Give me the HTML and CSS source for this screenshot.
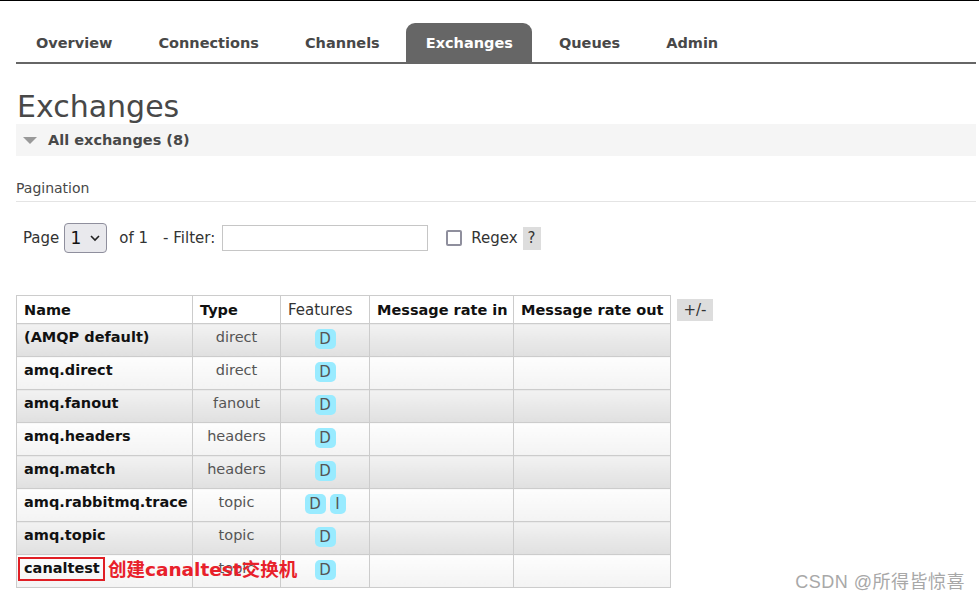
FILE: index.html
```html
<!DOCTYPE html>
<html>
<head>
<meta charset="utf-8">
<link rel="stylesheet" href="styles.css">
</head>
<body>
<div class="page">
  <ul class="tabs">
    <li class="tab">Overview</li>
    <li class="tab">Connections</li>
    <li class="tab">Channels</li>
    <li class="tab active">Exchanges</li>
    <li class="tab">Queues</li>
    <li class="tab">Admin</li>
  </ul>
  <h1 class="title">Exchanges</h1>
  <div class="section-head"><span class="tri"></span>All exchanges (8)</div>
  <div class="pag-label">Pagination</div>
  <div class="pag-row">
    <span class="lbl">Page</span>
    <span class="select">1<svg class="chev" width="12" height="8" viewBox="0 0 12 8"><path d="M2 2 L6 6 L10 2" fill="none" stroke="#222" stroke-width="1.6"/></svg></span>
    <span class="lbl of">of 1</span>
    <span class="lbl filter">- Filter:</span>
    <span class="input"></span>
    <span class="checkbox"></span>
    <span class="lbl regex">Regex</span>
    <span class="help">?</span>
  </div>
  <div class="table-wrap">
    <table class="list">
      <colgroup>
        <col class="c-name"><col class="c-type"><col class="c-feat"><col class="c-in"><col class="c-out">
      </colgroup>
      <thead>
        <tr>
          <th>Name</th>
          <th>Type</th>
          <th class="plain">Features</th>
          <th>Message rate in</th>
          <th>Message rate out</th>
        </tr>
      </thead>
      <tbody>
        <tr class="odd"><td class="name">(AMQP default)</td><td class="type">direct</td><td class="feat"><span class="badge">D</span></td><td></td><td></td></tr>
        <tr class="even"><td class="name">amq.direct</td><td class="type">direct</td><td class="feat"><span class="badge">D</span></td><td></td><td></td></tr>
        <tr class="odd"><td class="name">amq.fanout</td><td class="type">fanout</td><td class="feat"><span class="badge">D</span></td><td></td><td></td></tr>
        <tr class="even"><td class="name">amq.headers</td><td class="type">headers</td><td class="feat"><span class="badge">D</span></td><td></td><td></td></tr>
        <tr class="odd"><td class="name">amq.match</td><td class="type">headers</td><td class="feat"><span class="badge">D</span></td><td></td><td></td></tr>
        <tr class="even"><td class="name">amq.rabbitmq.trace</td><td class="type">topic</td><td class="feat"><span class="badge">D</span><span class="badge">I</span></td><td></td><td></td></tr>
        <tr class="odd"><td class="name">amq.topic</td><td class="type">topic</td><td class="feat"><span class="badge">D</span></td><td></td><td></td></tr>
        <tr class="even"><td class="name last">canaltest<span class="mark-box"></span><span class="mark-text">创建canaltest交换机</span></td><td class="type">topic</td><td class="feat"><span class="badge">D</span></td><td></td><td></td></tr>
      </tbody>
    </table>
    <span class="toggle">+/-</span>
  </div>
</div>
<div class="watermark">CSDN @所得皆惊喜</div>
</body>
</html>
```

FILE: styles.css
```css
html, body {
  margin: 0;
  padding: 0;
  background: #fff;
}
body {
  border-top: 1px solid #000;
  font-family: "DejaVu Sans", Verdana, sans-serif;
  color: #484848;
  position: relative;
  height: 597px;
  overflow: hidden;
}
.page {
  padding: 0 3px 0 16px;
}
.tabs {
  list-style: none;
  margin: 22px 0 0 0;
  padding: 0;
  display: flex;
  border-bottom: 2px solid #666;
}
.tab {
  font-size: 14.5px;
  font-weight: bold;
  color: #484848;
  padding: 0 19px 0 20px;
  margin-right: 7px;
  height: 39px;
  line-height: 41px;
  border-radius: 9px 9px 0 0;
}
.tab.active {
  background: #666;
  color: #fff;
}
.title {
  font-size: 30px;
  font-weight: normal;
  color: #484848;
  margin: 26px 0 0 1px;
  line-height: 34px;
  height: 34px;
}
.section-head {
  background: #f5f5f5;
  height: 32px;
  line-height: 32px;
  font-size: 14.5px;
  font-weight: bold;
  display: flex;
  align-items: center;
  padding-left: 7px;
}
.tri {
  width: 0;
  height: 0;
  border-left: 7px solid transparent;
  border-right: 7px solid transparent;
  border-top: 7px solid #999;
  margin-right: 11px;
  margin-top: 1px;
}
.pag-label {
  margin-top: 23px;
  font-size: 14px;
  color: #484848;
  line-height: 18px;
  padding-bottom: 4px;
  border-bottom: 1px solid #e4e4e4;
}
.pag-row {
  display: flex;
  align-items: center;
  margin-top: 20px;
  padding-left: 7px;
  height: 32px;
  font-size: 15px;
  color: #333;
}
.lbl { line-height: 20px; }
.select {
  margin-left: 5px;
  width: 41px;
  height: 28px;
  border: 1px solid #8f8f9d;
  border-radius: 4px;
  background: #e9e9ed;
  display: flex;
  align-items: center;
  justify-content: center;
  gap: 8px;
  font-size: 17px;
  color: #111;
}
.of { margin-left: 12px; }
.filter { margin-left: 15px; }
.input {
  margin-left: 7px;
  width: 204px;
  height: 24px;
  border: 1px solid #c6c6c6;
  background: #fff;
}
.checkbox {
  margin-left: 18px;
  width: 12px;
  height: 12px;
  border: 2px solid #8f8f9d;
  border-radius: 2px;
}
.regex { margin-left: 9px; }
.help {
  margin-left: 5px;
  background: #ddd;
  width: 18px;
  height: 23px;
  line-height: 23px;
  text-align: center;
}
.table-wrap {
  margin-top: 41px;
  display: flex;
  align-items: flex-start;
}
.list {
  border-collapse: collapse;
  border: 1px solid #ccc;
  font-size: 14.5px;
  table-layout: fixed;
  width: 654px;
}
.c-name { width: 176px; }
.c-type { width: 88px; }
.c-feat { width: 89px; }
.c-in { width: 144px; }
.c-out { width: 157px; }
.list th, .list td {
  border: 1px solid #ccc;
  padding: 0 7px;
  box-sizing: border-box;
  overflow: visible;
}
.list th {
  height: 28px;
  text-align: left;
  color: #111;
  font-weight: bold;
  font-size: 14.5px;
  background: #fff;
  line-height: 20px;
  white-space: nowrap;
}
.list th.plain { font-weight: normal; color: #333; font-size: 15px; }
.list td {
  height: 33px;
  padding-top: 3px;
  padding-bottom: 9px;
  line-height: 20px;
  vertical-align: top;
}
tr.odd td { background: linear-gradient(#f2f2f2, #e0e0e0); }
tr.even td { background: linear-gradient(#fdfdfd, #f3f3f3); }
td.name {
  font-weight: bold;
  color: #111;
  white-space: nowrap;
  position: relative;
}
td.type {
  text-align: center;
  color: #555;
}
td.feat {
  text-align: center;
  padding-top: 5px;
  padding-bottom: 7px;
  white-space: nowrap;
}
.badge {
  display: inline-block;
  background: #99ebff;
  color: #555;
  border-radius: 5px;
  width: 21px;
  height: 20px;
  line-height: 21px;
  text-align: center;
  font-size: 15px;
  margin: 0 3px;
}
.badge + .badge { width: 16px; margin-left: 1px; }
.mark-box {
  position: absolute;
  left: 1px;
  top: 2px;
  width: 87px;
  height: 24px;
  border: 2px solid #e01e24;
  box-sizing: border-box;
}
.mark-text {
  position: absolute;
  left: 91px;
  top: 3px;
  color: #e8202a;
  font-size: 18.5px;
  font-weight: bold;
  font-family: "DejaVu Sans", "Noto Sans CJK SC", sans-serif;
  line-height: 24px;
  white-space: nowrap;
}
.toggle {
  margin-left: 6px;
  margin-top: 4px;
  background: #ddd;
  width: 36px;
  height: 22px;
  line-height: 22px;
  text-align: center;
  font-size: 15px;
  color: #333;
}
.watermark {
  position: absolute;
  right: 14px;
  top: 566px;
  font-family: "Liberation Sans", "Noto Sans CJK SC", sans-serif;
  font-size: 18px;
  letter-spacing: 0.5px;
  color: #a8a8a8;
}
```
